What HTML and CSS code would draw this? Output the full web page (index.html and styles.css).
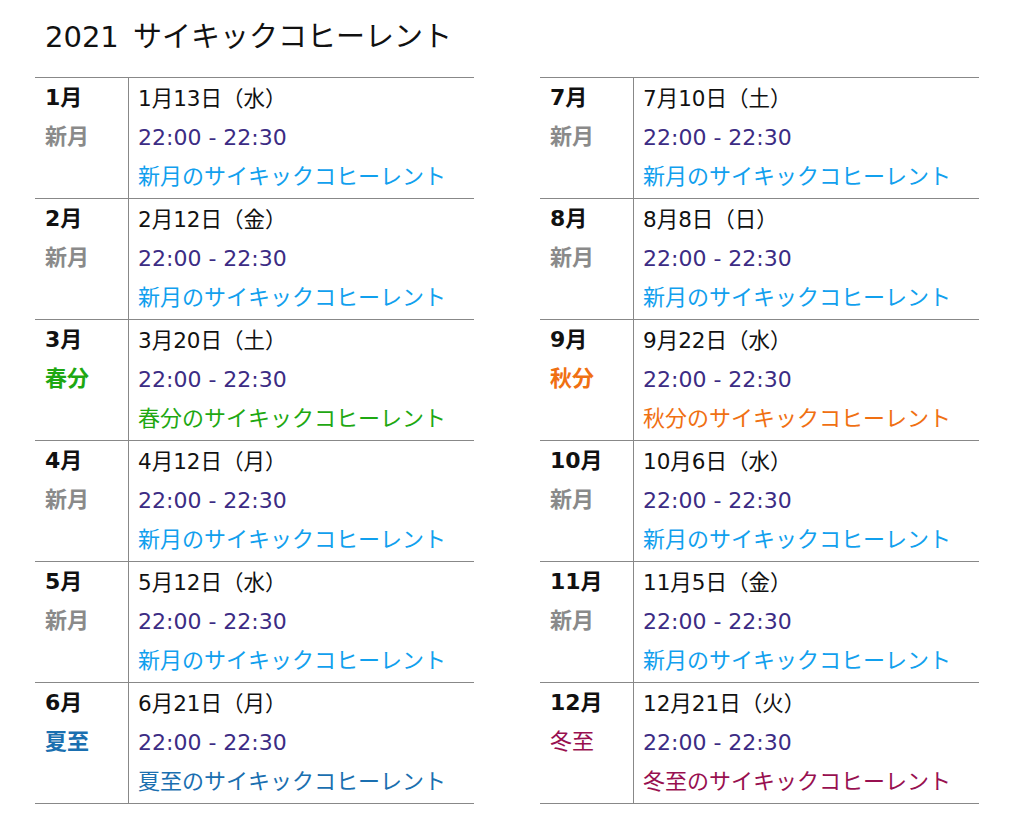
FILE: index.html
```html
<!DOCTYPE html>
<html lang="ja">
<head>
<meta charset="utf-8">
<title>2021 サイキックコヒーレント</title>
<link rel="stylesheet" href="styles.css">
</head>
<body>
<h1 class="title">2021 サイキックコヒーレント</h1>
<div class="tables">
  <div class="table">
    <div class="row"><div class="mon"><div class="m">1月</div><div class="kind new">新月</div></div><div class="info"><div class="date">1月13日（水）</div><div class="time">22:00 - 22:30</div><div class="link new-l">新月のサイキックコヒーレント</div></div></div>
    <div class="row"><div class="mon"><div class="m">2月</div><div class="kind new">新月</div></div><div class="info"><div class="date">2月12日（金）</div><div class="time">22:00 - 22:30</div><div class="link new-l">新月のサイキックコヒーレント</div></div></div>
    <div class="row"><div class="mon"><div class="m">3月</div><div class="kind spring">春分</div></div><div class="info"><div class="date">3月20日（土）</div><div class="time">22:00 - 22:30</div><div class="link spring">春分のサイキックコヒーレント</div></div></div>
    <div class="row"><div class="mon"><div class="m">4月</div><div class="kind new">新月</div></div><div class="info"><div class="date">4月12日（月）</div><div class="time">22:00 - 22:30</div><div class="link new-l">新月のサイキックコヒーレント</div></div></div>
    <div class="row"><div class="mon"><div class="m">5月</div><div class="kind new">新月</div></div><div class="info"><div class="date">5月12日（水）</div><div class="time">22:00 - 22:30</div><div class="link new-l">新月のサイキックコヒーレント</div></div></div>
    <div class="row"><div class="mon"><div class="m">6月</div><div class="kind summer">夏至</div></div><div class="info"><div class="date">6月21日（月）</div><div class="time">22:00 - 22:30</div><div class="link summer">夏至のサイキックコヒーレント</div></div></div>
  </div>
  <div class="table">
    <div class="row"><div class="mon"><div class="m">7月</div><div class="kind new">新月</div></div><div class="info"><div class="date">7月10日（土）</div><div class="time">22:00 - 22:30</div><div class="link new-l">新月のサイキックコヒーレント</div></div></div>
    <div class="row"><div class="mon"><div class="m">8月</div><div class="kind new">新月</div></div><div class="info"><div class="date">8月8日（日）</div><div class="time">22:00 - 22:30</div><div class="link new-l">新月のサイキックコヒーレント</div></div></div>
    <div class="row"><div class="mon"><div class="m">9月</div><div class="kind autumn">秋分</div></div><div class="info"><div class="date">9月22日（水）</div><div class="time">22:00 - 22:30</div><div class="link autumn">秋分のサイキックコヒーレント</div></div></div>
    <div class="row"><div class="mon"><div class="m">10月</div><div class="kind new">新月</div></div><div class="info"><div class="date">10月6日（水）</div><div class="time">22:00 - 22:30</div><div class="link new-l">新月のサイキックコヒーレント</div></div></div>
    <div class="row"><div class="mon"><div class="m">11月</div><div class="kind new">新月</div></div><div class="info"><div class="date">11月5日（金）</div><div class="time">22:00 - 22:30</div><div class="link new-l">新月のサイキックコヒーレント</div></div></div>
    <div class="row"><div class="mon"><div class="m">12月</div><div class="kind winter">冬至</div></div><div class="info"><div class="date">12月21日（火）</div><div class="time">22:00 - 22:30</div><div class="link winter">冬至のサイキックコヒーレント</div></div></div>
  </div>
</div>
</body>
</html>
```
FILE: styles.css
```css
html, body {
  margin: 0;
  padding: 0;
  background: #fff;
}
body {
  font-family: "DejaVu Sans", "Noto Sans CJK JP", sans-serif;
  color: #111;
}
.title {
  margin: 0;
  padding: 17px 0 0 45px;
  height: 77px;
  box-sizing: border-box;
  font-size: 29px;
  font-weight: 400;
  line-height: 40px;
  word-spacing: 5px;
}
.tables {
  display: flex;
  gap: 66px;
  padding-left: 35px;
}
.table {
  width: 439px;
  border-top: 1px solid #888;
}
.row {
  display: flex;
  border-bottom: 1px solid #888;
  height: 120px;
}
.mon {
  width: 94px;
  border-right: 1px solid #888;
  padding: 1px 0 0 10px;
  box-sizing: border-box;
  font-weight: 700;
  font-size: 22px;
  line-height: 38px;
}
.info {
  flex: 1;
  padding: 1px 0 0 9px;
  font-size: 22px;
  line-height: 39px;
}
.date {
  font-size: 21.5px;
  color: #111;
}
.m { color: #111; }
.kind { line-height: 40px; font-size: 22px; }
.kind.new { color: #8a8a8a; }
.time { color: #3c2c84; }
.new-l { color: #11a0ee; }
.spring { color: #1ea812; }
.autumn { color: #f07012; }
.summer { color: #1a6fb0; }
.winter { color: #981050; }
.kind.winter { font-weight: 400; }
```
